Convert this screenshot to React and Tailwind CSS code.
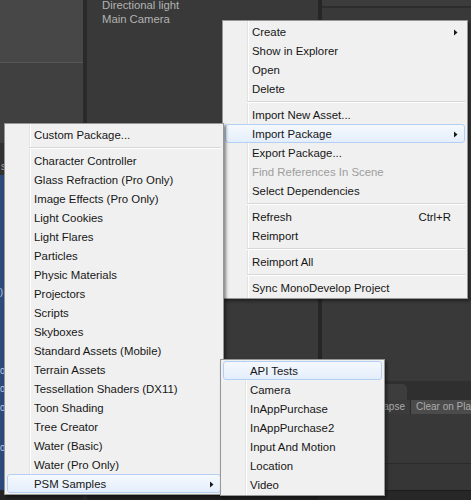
const MAIN_MENU = [
  { label: "Create", sub: true },
  { label: "Show in Explorer" },
  { label: "Open" },
  { label: "Delete" },
  { sep: true },
  { label: "Import New Asset..." },
  { label: "Import Package", sub: true, hot: true },
  { label: "Export Package..." },
  { label: "Find References In Scene", disabled: true },
  { label: "Select Dependencies" },
  { sep: true },
  { label: "Refresh", shortcut: "Ctrl+R" },
  { label: "Reimport" },
  { sep: true },
  { label: "Reimport All" },
  { sep: true },
  { label: "Sync MonoDevelop Project" },
];

const PACKAGE_MENU = [
  { label: "Custom Package..." },
  { sep: true },
  { label: "Character Controller" },
  { label: "Glass Refraction (Pro Only)" },
  { label: "Image Effects (Pro Only)" },
  { label: "Light Cookies" },
  { label: "Light Flares" },
  { label: "Particles" },
  { label: "Physic Materials" },
  { label: "Projectors" },
  { label: "Scripts" },
  { label: "Skyboxes" },
  { label: "Standard Assets (Mobile)" },
  { label: "Terrain Assets" },
  { label: "Tessellation Shaders (DX11)" },
  { label: "Toon Shading" },
  { label: "Tree Creator" },
  { label: "Water (Basic)" },
  { label: "Water (Pro Only)" },
  { label: "PSM Samples", sub: true, hot: true },
];

const PSM_MENU = [
  { label: "API Tests", hot: true },
  { label: "Camera" },
  { label: "InAppPurchase" },
  { label: "InAppPurchase2" },
  { label: "Input And Motion" },
  { label: "Location" },
  { label: "Video" },
];

// clipped inspector values peeking out on the left edge (gap above each line)
const INSPECTOR_BITS = [
  { gap: 113, ch: ")" },
  { gap: 70, ch: "0," },
  { gap: 9, ch: "0" },
  { gap: 10, ch: "0" },
  { gap: 31, ch: "0" },
];

function Arrow() {
  return (
    <svg width="4" height="7" viewBox="0 0 4 7" className="ml-auto shrink-0">
      <polygon points="0,0.5 3.5,3.5 0,6.5" fill="#1a1a1a" />
    </svg>
  );
}

function Menu({ items, className }) {
  return (
    <div
      className={`absolute border border-[#979797] p-[1px] bg-[#f0f0f0] bg-[linear-gradient(to_right,#f0f0f0_24px,#e2e3e3_24px,#e2e3e3_25px,#ffffff_25px,#ffffff_26px,#f0f0f0_26px)] shadow-[2px_2px_3px_rgba(0,0,0,0.45)] ${className}`}
    >
      {items.map((it, i) =>
        it.sep ? (
          <div key={i} className="h-[7px] pt-[3px] ml-[23px] mr-[1px]">
            <div className="h-[1px] bg-[#d7d7d7]" />
            <div className="h-[1px] bg-white" />
          </div>
        ) : (
          <div
            key={i}
            className={`mx-[1px] h-[19px] flex items-center rounded-[3px] border pt-[2px] pl-[26px] pr-[6px] ${
              it.hot
                ? "border-[#b3d0f3] bg-[linear-gradient(#f5f9fe,#e4eefb)]"
                : "border-transparent"
            }`}
          >
            <span className={`whitespace-nowrap ${it.disabled ? "text-[#9d9d9d]" : "text-[#161616]"}`}>
              {it.label}
            </span>
            {it.shortcut && (
              <span className="ml-auto mr-[7px] text-[#161616]">{it.shortcut}</span>
            )}
            {it.sub && <Arrow />}
          </div>
        )
      )}
    </div>
  );
}

export default function App() {
  return (
    <div className="relative w-[471px] h-[500px] overflow-hidden bg-[#383838] [font-family:'Liberation_Sans',Arial,sans-serif] text-[11.4px] leading-none">
      {/* editor panels underneath */}
      <div className="flex h-full">
        {/* project / scene column */}
        <div className="w-[83px] shrink-0 flex flex-col">
          <div className="h-[62px] bg-[#474747]" />
          <div className="h-[1px] bg-[#575757]" />
          <div className="h-[80px] bg-[#404040]" />
          <div className="h-[32px] bg-[#313131] pt-[19px] pl-[1px] text-[10px] text-[#a8a8a8]">s</div>
          <div className="flex-1 bg-[#2c4a7b] flex flex-col text-[9px] leading-[9px] text-[#c9d3e6]">
            {INSPECTOR_BITS.map((b, i) => (
              <div key={i} style={{ marginTop: b.gap }}>
                {b.ch}
              </div>
            ))}
          </div>
          <div className="h-[10px] bg-[#232323]" />
        </div>
        <div className="w-[4px] shrink-0 bg-[#2a2a2a]" />

        {/* hierarchy */}
        <div className="w-[231px] shrink-0 flex flex-col bg-[#393939]">
          <div className="pl-[15px] -mt-[2px] text-[11.3px] leading-[14px] text-[#b2b2b2]">
            <div>Directional light</div>
            <div>Main Camera</div>
          </div>
          <div className="flex-1" />
          <div className="h-[5px] bg-[#202020]" />
        </div>
        <div className="w-[4px] shrink-0 bg-[#262626]" />

        {/* scene view + console */}
        <div className="flex-1 flex flex-col min-w-0">
          <div className="h-[6px] bg-[#3c3c3c]" />
          <div className="h-[2px] bg-[#2d2d2d]" />
          <div className="h-[373px] bg-[#393939]" />
          <div className="h-[19px] bg-[#2f2f2f] flex items-end">
            <div className="ml-[10px] w-[75px] h-[16px] rounded-tr-[5px] bg-[#3d3d3d] pl-[8px] flex items-center text-[10px] text-[#b0b0b0]">
              Console
            </div>
          </div>
          <div className="h-[14px] flex text-[10px] text-[#ababab]">
            <div className="w-[89px] shrink-0 bg-[#3b3b3b] border-r border-[#2a2a2a] flex items-center justify-end pr-[5px]">
              Collapse
            </div>
            <div className="flex-1 min-w-0 overflow-hidden bg-[#4b4b4b] flex items-center pl-[5px] whitespace-nowrap">
              Clear on Play
            </div>
          </div>
          <div className="h-[49px] bg-[#383838]" />
          <div className="h-[1px] bg-[#2b2b2b]" />
          <div className="h-[26px] bg-[#363636]" />
          <div className="h-[1px] bg-[#1c1c1c]" />
          <div className="flex-1 bg-[#272727]" />
        </div>
      </div>

      {/* context menus */}
      <Menu items={MAIN_MENU} className="left-[222px] top-[20px] w-[246px]" />
      <Menu items={PACKAGE_MENU} className="left-[4px] top-[123px] w-[220px]" />
      <Menu items={PSM_MENU} className="left-[220px] top-[359px] w-[165px]" />
    </div>
  );
}
